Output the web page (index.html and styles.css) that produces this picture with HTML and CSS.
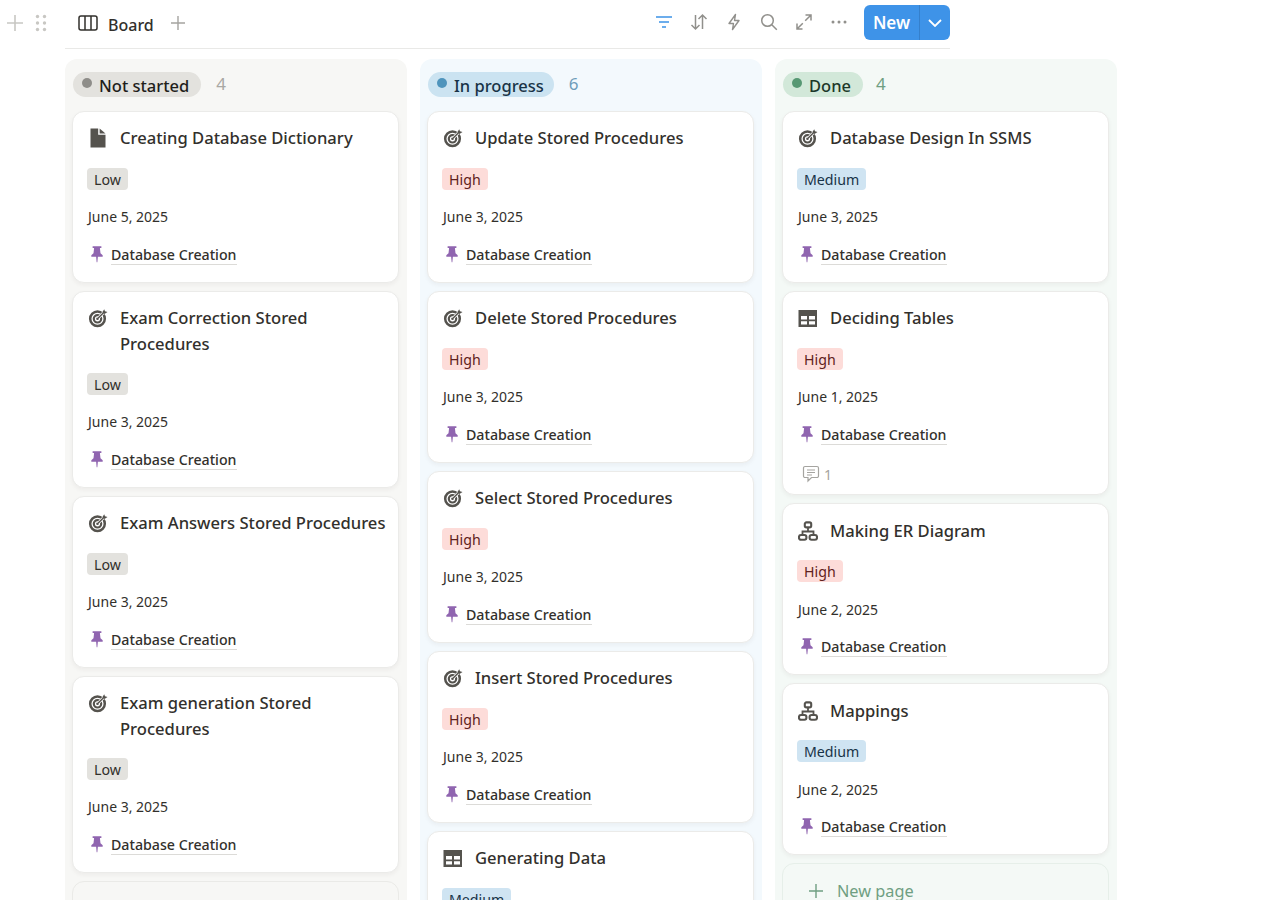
FILE: index.html
```html
<!DOCTYPE html>
<html lang="en">
<head>
<meta charset="utf-8">
<title>Board</title>
<link rel="stylesheet" href="styles.css">
</head>
<body>
<svg class="defs" width="0" height="0" aria-hidden="true">
  <symbol id="i-target" viewBox="0 0 20 20">
    <circle cx="9.500" cy="10.800" r="7.300" fill="none" stroke="currentColor" stroke-width="2.500"/>
    <circle cx="9.500" cy="10.800" r="3.700" fill="none" stroke="currentColor" stroke-width="2.200"/>
    <circle cx="9.500" cy="10.800" r="1.300" fill="currentColor"/>
    <path d="M10 10.300 16.500 3.800" stroke="#fff" stroke-width="2.800"/>
    <path d="M9.500 10.800 16 4.300" stroke="currentColor" stroke-width="1.400"/>
    <path d="M14.300 4.300 16.200 1.200l.8 2.100 2.500.6-3 2.100z" fill="currentColor"/>
  </symbol>
  <symbol id="i-doc" viewBox="0 0 20 20">
    <path d="M2.500 .5h7.700v6.300H17.500V19.500H2.500z" fill="currentColor"/>
    <path d="M11.600 .5 17.500 5.500h-5.900z" fill="currentColor"/>
  </symbol>
  <symbol id="i-table" viewBox="0 0 20 20">
    <path d="M.500 2h18.500v17H.500zM3 8v3.400h6V8zm8 0v3.400h6V8zM3 13.200v3.400h6v-3.400zm8 0v3.400h6v-3.400z" fill="currentColor" fill-rule="evenodd"/>
  </symbol>
  <symbol id="i-tree" viewBox="0 0 20 20">
    <g fill="none" stroke="currentColor" stroke-width="2.100">
      <rect x="6.800" y="1.400" width="6.400" height="5" rx="1.600"/>
      <rect x="1" y="14" width="7.400" height="4.800" rx="2"/>
      <rect x="11.600" y="14" width="7.400" height="4.800" rx="2"/>
      <path d="M10 6.400V10.500M4.500 14V10.500h11V14" stroke-width="1.800"/>
    </g>
  </symbol>
  <symbol id="i-pin" viewBox="0 0 16 20">
    <path d="M3 1h10v2h-1.700l.7 6 2.500 2.500V13H9l-.6 6.500h-.8L7 13H1.500v-1.500L4 9l.7-6H3z" fill="currentColor"/>
  </symbol>
</svg>

<header class="topbar">
  <div class="gutter">
    <svg class="gutter-plus" width="18" height="18" viewBox="0 0 18 18"><path d="M9 1v16M1 9h16" stroke="currentColor" stroke-width="1.600"/></svg>
    <svg class="grip" width="12" height="18" viewBox="0 0 12 18"><g fill="currentColor"><circle cx="2.500" cy="2.500" r="1.700"/><circle cx="9.500" cy="2.500" r="1.700"/><circle cx="2.500" cy="9" r="1.700"/><circle cx="9.500" cy="9" r="1.700"/><circle cx="2.500" cy="15.500" r="1.700"/><circle cx="9.500" cy="15.500" r="1.700"/></g></svg>
  </div>
  <div class="toolbar">
    <div class="tab">
      <svg class="tab-icon" width="20" height="16" viewBox="0 0 20 16"><path d="M3 1h14a2 2 0 0 1 2 2v10a2 2 0 0 1-2 2H3a2 2 0 0 1-2-2V3a2 2 0 0 1 2-2zM7 1v14M13 1v14" fill="none" stroke="currentColor" stroke-width="1.500"/></svg>
      <span class="tab-name">Board</span>
      <svg class="tab-add" width="14" height="14" viewBox="0 0 14 14"><path d="M7 0v14M0 7h14" stroke="currentColor" stroke-width="1.400"/></svg>
    </div>
    <div class="actions">
      <svg class="act act-on" viewBox="0 0 18 18"><path d="M1 4h16M4 9h10M7 14h4" stroke="currentColor" stroke-width="1.700" fill="none"/></svg>
      <svg class="act" viewBox="0 0 18 18"><path d="M5.500 2v14M1.500 12l4 4 4-4M12.500 16V2M8.500 6l4-4 4 4" stroke="currentColor" stroke-width="1.500" fill="none"/></svg>
      <svg class="act" viewBox="0 0 18 18"><path d="M10.500 1.500 4 10.500h4.500L7.500 16.500 14 7.500H9.500z" stroke="currentColor" stroke-width="1.400" fill="none" stroke-linejoin="round"/></svg>
      <svg class="act" viewBox="0 0 18 18"><circle cx="7.500" cy="7.500" r="5.800" stroke="currentColor" stroke-width="1.500" fill="none"/><path d="m11.800 11.800 5 5" stroke="currentColor" stroke-width="1.500"/></svg>
      <svg class="act" viewBox="0 0 18 18"><path d="M10.500 2H16v5.500M16 2l-5.800 5.800M7.500 16H2v-5.500M2 16l5.800-5.800" stroke="currentColor" stroke-width="1.500" fill="none"/></svg>
      <svg class="act" viewBox="0 0 18 18"><g fill="currentColor"><circle cx="3" cy="9" r="1.500"/><circle cx="9" cy="9" r="1.500"/><circle cx="15" cy="9" r="1.500"/></g></svg>
      <div class="new-btn">
        <span class="new-label">New</span>
        <span class="new-caret"><svg width="14" height="8" viewBox="0 0 14 8"><path d="m1 1 6 6 6-6" stroke="currentColor" stroke-width="1.800" fill="none"/></svg></span>
      </div>
    </div>
  </div>
</header>

<main class="board">

  <section class="col col-grey">
    <div class="col-head"><span class="pill"><span class="dot"></span>Not started</span><span class="count">4</span></div>
    <article class="card">
      <h3 class="title"><svg class="ticon"><use href="#i-doc"/></svg><span>Creating Database Dictionary</span></h3>
      <div class="row"><span class="tag tag-low">Low</span></div>
      <div class="date">June 5, 2025</div>
      <div class="rel"><svg class="pin"><use href="#i-pin"/></svg><span class="rel-name">Database Creation</span></div>
    </article>
    <article class="card">
      <h3 class="title title-wrap"><svg class="ticon"><use href="#i-target"/></svg><span>Exam Correction Stored Procedures</span></h3>
      <div class="row"><span class="tag tag-low">Low</span></div>
      <div class="date">June 3, 2025</div>
      <div class="rel"><svg class="pin"><use href="#i-pin"/></svg><span class="rel-name">Database Creation</span></div>
    </article>
    <article class="card">
      <h3 class="title"><svg class="ticon"><use href="#i-target"/></svg><span>Exam Answers Stored Procedures</span></h3>
      <div class="row"><span class="tag tag-low">Low</span></div>
      <div class="date">June 3, 2025</div>
      <div class="rel"><svg class="pin"><use href="#i-pin"/></svg><span class="rel-name">Database Creation</span></div>
    </article>
    <article class="card">
      <h3 class="title title-wrap"><svg class="ticon"><use href="#i-target"/></svg><span>Exam generation Stored Procedures</span></h3>
      <div class="row"><span class="tag tag-low">Low</span></div>
      <div class="date">June 3, 2025</div>
      <div class="rel"><svg class="pin"><use href="#i-pin"/></svg><span class="rel-name">Database Creation</span></div>
    </article>
    <div class="ghost ghost-grey"></div>
  </section>

  <section class="col col-blue">
    <div class="col-head"><span class="pill"><span class="dot"></span>In progress</span><span class="count">6</span></div>
    <article class="card">
      <h3 class="title"><svg class="ticon"><use href="#i-target"/></svg><span>Update Stored Procedures</span></h3>
      <div class="row"><span class="tag tag-high">High</span></div>
      <div class="date">June 3, 2025</div>
      <div class="rel"><svg class="pin"><use href="#i-pin"/></svg><span class="rel-name">Database Creation</span></div>
    </article>
    <article class="card">
      <h3 class="title"><svg class="ticon"><use href="#i-target"/></svg><span>Delete Stored Procedures</span></h3>
      <div class="row"><span class="tag tag-high">High</span></div>
      <div class="date">June 3, 2025</div>
      <div class="rel"><svg class="pin"><use href="#i-pin"/></svg><span class="rel-name">Database Creation</span></div>
    </article>
    <article class="card">
      <h3 class="title"><svg class="ticon"><use href="#i-target"/></svg><span>Select Stored Procedures</span></h3>
      <div class="row"><span class="tag tag-high">High</span></div>
      <div class="date">June 3, 2025</div>
      <div class="rel"><svg class="pin"><use href="#i-pin"/></svg><span class="rel-name">Database Creation</span></div>
    </article>
    <article class="card">
      <h3 class="title"><svg class="ticon"><use href="#i-target"/></svg><span>Insert Stored Procedures</span></h3>
      <div class="row"><span class="tag tag-high">High</span></div>
      <div class="date">June 3, 2025</div>
      <div class="rel"><svg class="pin"><use href="#i-pin"/></svg><span class="rel-name">Database Creation</span></div>
    </article>
    <article class="card">
      <h3 class="title"><svg class="ticon"><use href="#i-table"/></svg><span>Generating Data</span></h3>
      <div class="row"><span class="tag tag-med">Medium</span></div>
      <div class="date">June 3, 2025</div>
      <div class="rel"><svg class="pin"><use href="#i-pin"/></svg><span class="rel-name">Database Creation</span></div>
    </article>
  </section>

  <section class="col col-green">
    <div class="col-head"><span class="pill"><span class="dot"></span>Done</span><span class="count">4</span></div>
    <article class="card">
      <h3 class="title"><svg class="ticon"><use href="#i-target"/></svg><span>Database Design In SSMS</span></h3>
      <div class="row"><span class="tag tag-med">Medium</span></div>
      <div class="date">June 3, 2025</div>
      <div class="rel"><svg class="pin"><use href="#i-pin"/></svg><span class="rel-name">Database Creation</span></div>
    </article>
    <article class="card">
      <h3 class="title"><svg class="ticon"><use href="#i-table"/></svg><span>Deciding Tables</span></h3>
      <div class="row"><span class="tag tag-high">High</span></div>
      <div class="date">June 1, 2025</div>
      <div class="rel"><svg class="pin"><use href="#i-pin"/></svg><span class="rel-name">Database Creation</span></div>
      <div class="comments">
        <svg width="18" height="18" viewBox="0 0 18 18"><path d="M3 1.500h12a1.500 1.500 0 0 1 1.500 1.500v8a1.500 1.500 0 0 1-1.500 1.500H9.500L6 16v-3.500H3A1.500 1.500 0 0 1 1.500 11V3A1.500 1.500 0 0 1 3 1.500zM5 5h8M5 7.500h8M5 10h5" fill="none" stroke="currentColor" stroke-width="1.200"/></svg>
        <span>1</span>
      </div>
    </article>
    <article class="card card-nudge">
      <h3 class="title"><svg class="ticon"><use href="#i-tree"/></svg><span>Making ER Diagram</span></h3>
      <div class="row"><span class="tag tag-high">High</span></div>
      <div class="date">June 2, 2025</div>
      <div class="rel"><svg class="pin"><use href="#i-pin"/></svg><span class="rel-name">Database Creation</span></div>
    </article>
    <article class="card card-nudge">
      <h3 class="title"><svg class="ticon"><use href="#i-tree"/></svg><span>Mappings</span></h3>
      <div class="row"><span class="tag tag-med">Medium</span></div>
      <div class="date">June 2, 2025</div>
      <div class="rel"><svg class="pin"><use href="#i-pin"/></svg><span class="rel-name">Database Creation</span></div>
    </article>
    <div class="ghost ghost-green">
      <svg width="14" height="14" viewBox="0 0 14 14"><path d="M7 0v14M0 7h14" stroke="currentColor" stroke-width="1.400"/></svg>
      <span>New page</span>
    </div>
  </section>

</main>
</body>
</html>
```

FILE: styles.css
```css
* { box-sizing: border-box; }

html, body {
  margin: 0;
  height: 900px;
  overflow: hidden;
  background: #fff;
}

body {
  font-family: "Noto Sans", "Open Sans", sans-serif;
  color: #32302c;
}

.defs { display: block; height: 0; }

/* top bar */
.topbar {
  display: flex;
  height: 49px;
}

.gutter {
  width: 65px;
  flex: none;
  display: flex;
  align-items: center;
  padding: 0 0 3px 6px;
  gap: 11px;
  color: #c8c7c3;
}

.toolbar {
  width: 885px;
  display: flex;
  align-items: flex-start;
  justify-content: space-between;
  border-bottom: 1px solid #e9e9e7;
}

.tab {
  display: flex;
  align-items: center;
  height: 48px;
  padding: 0 0 0 13px;
  color: #32302c;
}

.tab-icon { margin-top: -3px; }

.tab-name {
  margin-left: 10px;
  font-size: 16px;
  font-weight: 500;
  padding-top: 1px;
}

.tab-add {
  margin: -3px 0 0 17px;
  color: #a5a4a0;
}

.actions {
  display: flex;
  align-items: flex-start;
  padding-top: 5px;
}

.act {
  width: 18px;
  height: 18px;
  margin: 8px 17px 0 0;
  color: #91908c;
}

.act-on { color: #3c92e6; }

.new-btn {
  display: flex;
  width: 86px;
  height: 35px;
  margin-left: -1px;
  border-radius: 6px;
  background: #3e93e8;
  color: #fff;
}

.new-label {
  flex: 1;
  text-align: center;
  font-size: 17px;
  font-weight: 600;
  line-height: 36px;
  border-right: 1px solid #3580cc;
}

.new-caret {
  width: 30px;
  display: flex;
  align-items: center;
  justify-content: center;
}

/* board */
.board {
  display: flex;
  gap: 13px;
  margin: 10px 0 0 65px;
}

.col {
  width: 342px;
  height: 900px;
  padding: 13px 8px 0 7px;
  border-radius: 12px 12px 0 0;
  display: flex;
  flex-direction: column;
  gap: 8px;
}

.col-grey { background: #f7f7f5; }
.col-blue { background: #f3f9fd; }
.col-green { background: #f4f9f6; }

.col-head {
  display: flex;
  align-items: center;
  height: 25px;
  margin: 0 0 6px 1px;
  flex: none;
}

.pill {
  display: inline-flex;
  align-items: center;
  height: 25px;
  padding: 1px 12px 0 9px;
  border-radius: 13px;
  font-size: 16.500px;
  font-weight: 500;
  color: #1f1e1b;
}

.dot {
  width: 10px;
  height: 10px;
  border-radius: 50%;
  margin-right: 7px;
  margin-top: -4px;
}

.col-grey .pill { background: #e3e2de; }
.col-grey .dot { background: #8e8d89; }
.col-blue .pill { background: #cbe3f1; color: #183347; padding-right: 10px; }
.col-blue .dot { background: #4f94bc; }
.col-green .pill { background: #d2e8d9; color: #1c3829; }
.col-green .dot { background: #579873; }

.count {
  margin-left: 15px;
  font-size: 17px;
  margin-top: -2px;
}

.col-grey .count { color: #a9a8a4; }
.col-blue .count { color: #6f9dba; }
.col-green .count { color: #6f9f82; margin-left: 13px; }

/* cards */
.card {
  flex: none;
  padding: 13px 14px 16px;
  border-radius: 12px;
  background: #fff;
  border: 1px solid #ebebe9;
  box-shadow: 0 2px 4px rgba(50, 48, 44, .05);
}

.title {
  display: flex;
  margin: 0 -4px 17px 0;
  font-size: 16.600px;
  font-weight: 500;
  line-height: 26px;
  color: #32302c;
}

.title-wrap { margin-bottom: 16px; }

.ticon {
  width: 20px;
  height: 20px;
  flex: none;
  margin: 3px 12px 0 1px;
  color: #55534e;
}

.row { height: 22px; margin-bottom: 16px; }

.tag {
  display: inline-block;
  height: 22px;
  padding: 0 7px;
  border-radius: 4px;
  font-size: 14.200px;
  line-height: 23px;
}

.tag-low { background: #e3e2de; color: #32302c; }
.tag-high { background: #fddcd9; color: #5f2120; }
.tag-med { background: #cfe4f2; color: #183347; }

.date {
  height: 22px;
  margin-bottom: 16px;
  padding-left: 1px;
  font-size: 14px;
  line-height: 22px;
  color: #32302c;
}

.card-nudge .title { padding-top: 1px; margin-bottom: 16px; }
.card-nudge .date { padding-top: 1px; }

.rel {
  display: flex;
  align-items: center;
  height: 22px;
}

.pin {
  width: 14px;
  height: 18px;
  flex: none;
  margin: -2px 7px 0 3px;
  color: #9065b0;
}

.rel-name {
  font-size: 14.200px;
  font-weight: 500;
  line-height: 18px;
  border-bottom: 1px solid #dcdbd8;
}

.comments {
  display: flex;
  align-items: center;
  gap: 4px;
  height: 16px;
  margin: 20px 0 -4px 5px;
  font-size: 14px;
  color: #a5a4a0;
}

.ghost {
  flex: none;
  height: 80px;
  border-radius: 12px;
  border: 1px solid #eaeae7;
}

.ghost-green {
  display: flex;
  align-items: flex-start;
  gap: 14px;
  padding: 18px 0 0 26px;
  border-color: #e6efe9;
  color: #6f9f82;
  font-size: 16.300px;
  line-height: 18px;
}

.ghost-green svg { margin-top: 2px; }
```
